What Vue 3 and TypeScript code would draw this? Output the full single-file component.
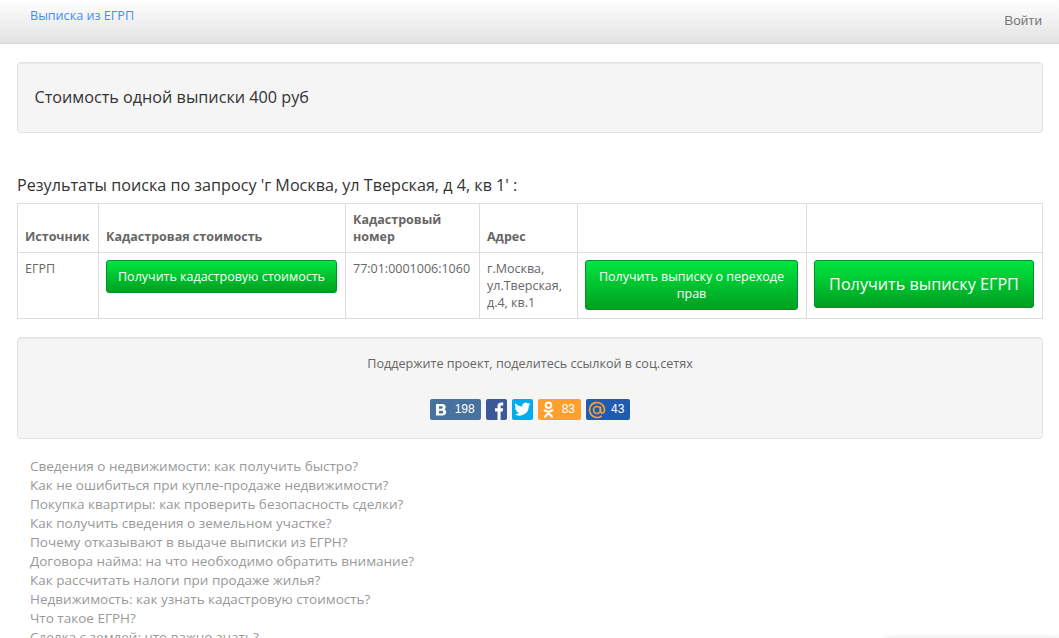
<script setup lang="ts">
const links: string[] = [
  'Сведения о недвижимости: как получить быстро?',
  'Как не ошибиться при купле-продаже недвижимости?',
  'Покупка квартиры: как проверить безопасность сделки?',
  'Как получить сведения о земельном участке?',
  'Почему отказывают в выдаче выписки из ЕГРН?',
  'Договора найма: на что необходимо обратить внимание?',
  'Как рассчитать налоги при продаже жилья?',
  'Недвижимость: как узнать кадастровую стоимость?',
  'Что такое ЕГРН?',
  'Сделка с землей: что важно знать?',
]
</script>

<template>
  <div class="page">
    <nav class="navbar">
      <a class="brand">Выписка из ЕГРП</a>
      <a class="login">Войти</a>
    </nav>
    <main class="content">
      <div class="well price">Стоимость одной выписки 400 руб</div>
      <h4 class="title">Результаты поиска по запросу 'г Москва, ул Тверская, д 4, кв 1' :</h4>
      <table class="table">
        <thead>
          <tr>
            <th class="c1">Источник</th>
            <th class="c2">Кадастровая стоимость</th>
            <th class="c3">Кадастровый номер</th>
            <th class="c4">Адрес</th>
            <th class="c5"></th>
            <th class="c6"></th>
          </tr>
        </thead>
        <tbody>
          <tr>
            <td>ЕГРП</td>
            <td><button class="btn">Получить кадастровую стоимость</button></td>
            <td>77:01:0001006:1060</td>
            <td>г.Москва, ул.Тверская, д.4, кв.1</td>
            <td><button class="btn wrap">Получить выписку о переходе прав</button></td>
            <td><button class="btn large">Получить выписку ЕГРП</button></td>
          </tr>
        </tbody>
      </table>
      <div class="well share">
        <p class="share-text">Поддержите проект, поделитесь ссылкой в соц.сетях</p>
        <div class="socials">
          <span class="soc vk">
            <svg width="22" height="21" viewBox="0 0 22 21"><path fill="#fff" fill-rule="evenodd" d="M6 5h6.200c2.300 0 3.500 1.100 3.500 2.900 0 1.200-.6 2-1.600 2.400 1.300.3 2.100 1.300 2.100 2.700 0 2.100-1.500 3.400-4 3.400H6zm3 2.300v2.400h2.500c.8 0 1.200-.5 1.200-1.200s-.4-1.200-1.200-1.200zm0 4.500v2.600h2.800c.9 0 1.400-.5 1.400-1.300s-.5-1.300-1.400-1.300z"/></svg>
            <span class="count">198</span>
          </span>
          <span class="soc fb">
            <svg width="21" height="21" viewBox="0 0 21 21"><path fill="#fff" d="M11.500 21v-8.500H9V9.300h2.500V7.200C11.500 4.600 13 3.400 15.200 3.400h2v3h-1.300c-1 0-1.300.5-1.300 1.300v1.600h2.500l-.4 3.200h-2.100V21z"/></svg>
          </span>
          <span class="soc tw">
            <svg width="21" height="21" viewBox="0 0 21 21"><path fill="#fff" d="M18.500 5.100c-.6.300-1.200.4-1.900.5.700-.4 1.200-1 1.400-1.800-.6.400-1.300.7-2.100.8a3.300 3.300 0 0 0-5.600 3C7.600 7.500 5.100 6.200 3.500 4.200c-.9 1.500-.4 3.400 1 4.400-.5 0-1-.2-1.500-.4 0 1.600 1.100 3 2.600 3.300-.5.100-1 .1-1.500 0 .4 1.300 1.600 2.200 3.100 2.300A6.600 6.600 0 0 1 2.500 15.100 9.300 9.300 0 0 0 16.800 6.800c.7-.4 1.200-1 1.700-1.700z"/></svg>
          </span>
          <span class="soc ok">
            <svg width="21" height="21" viewBox="0 0 21 21"><g fill="none" stroke="#fff" stroke-width="2"><circle cx="10.500" cy="6.300" r="2.800"/><path stroke-linecap="round" d="M6.500 11.200c2.500 1.700 5.500 1.700 8 0M10.500 13v1.300M10.500 14l-3.500 3.800M10.500 14l3.500 3.800"/></g></svg>
            <span class="count">83</span>
          </span>
          <span class="soc mail">
            <svg width="22" height="21" viewBox="0 0 22 21"><g fill="none" stroke="#ff9f2e" stroke-width="1.600"><circle cx="11" cy="11" r="3.500"/><path d="M14.500 7.500v5c0 2.400 4 2.200 4-1.500a7.500 7.500 0 1 0-2.800 5.800"/></g></svg>
            <span class="count">43</span>
          </span>
        </div>
      </div>
      <ul class="links">
        <li v-for="link in links" :key="link"><a>{{ link }}</a></li>
      </ul>
    </main>
    <div class="corner-shadow"></div>
  </div>
</template>

<style>
html, body { margin: 0; height: 638px; overflow: hidden; background: #fff; }
</style>

<style scoped>
.page {
  position: relative;
  font-family: "Open Sans", "Liberation Sans", sans-serif;
  font-size: 13px;
  line-height: 1.42857;
  color: #666;
  height: 638px;
  overflow: hidden;
}
.navbar {
  height: 43px;
  box-sizing: content-box;
  border-bottom: 1px solid #d4d4d4;
  background: linear-gradient(to bottom, #fff 0, #e2e2e2 100%);
  display: flex;
  justify-content: space-between;
  align-items: flex-start;
  padding: 0 17px 0 30px;
}
.brand { color: #428bff; font-size: 12.6px; line-height: 17px; margin-top: 7px; }
.login { color: #777; font-family: "Liberation Sans", Arial, sans-serif; font-size: 13.5px; line-height: 18px; margin-top: 12px; }
.content { padding: 18px 16px 0 17px; }
.well {
  background: #f5f5f5;
  border: 1px solid #e3e3e3;
  border-radius: 4px;
  box-shadow: inset 0 1px 1px rgba(0,0,0,.05);
  box-sizing: border-box;
}
.price {
  height: 71px;
  padding: 0 17px 0 16.500px;
  display: flex;
  align-items: center;
  font-size: 16.2px;
  color: #333;
}
.title {
  margin: 43px 0 9px;
  font-size: 16.15px;
  font-weight: 400;
  line-height: 18px;
  color: #333;
}
.table {
  width: 1026px;
  border-collapse: collapse;
  table-layout: fixed;
  margin-bottom: 18px;
}
th, td {
  border: 1px solid #ddd;
  padding: 7px 8px 7px 7px;
  vertical-align: top;
  text-align: left;
  font-size: 12.5px;
  line-height: 17px;
  box-sizing: border-box;
}
th { vertical-align: bottom; font-weight: 700; }
.c1 { width: 81px; }
.c2 { width: 247px; }
.c3 { width: 134px; }
.c4 { width: 98px; }
.c5 { width: 229px; }
.btn {
  display: block;
  width: 100%;
  font-family: inherit;
  font-size: 12.5px;
  line-height: 17px;
  color: #fff;
  padding: 7px 10px;
  border: 1px solid #00932c;
  border-radius: 3px;
  background: linear-gradient(to bottom, #00e640 0, #009f1f 100%);
  text-align: center;
  box-sizing: border-box;
}
.btn.wrap { height: 50px; }
.btn.large { font-size: 16.2px; line-height: 22px; padding: 12px 10px; height: 48px; }
.share { height: 102px; text-align: center; padding-top: 17px; }
.share-text { margin: 0; font-size: 12.6px; line-height: 18px; }
.socials {
  display: flex;
  justify-content: center;
  gap: 5px;
  margin-top: 26px;
}
.soc {
  display: flex;
  align-items: center;
  height: 21px;
  border-radius: 2px;
  color: #fff;
  font-family: "Liberation Sans", Arial, sans-serif;
  font-size: 12px;
  line-height: 21px;
}
.count { padding: 0 6px 0 3px; }
.vk { background: #48729e; }
.fb { background: #3b5998; }
.tw { background: #00aced; }
.ok { background: #ff9f2e; }
.mail { background: #1f5cb0; }
.links { list-style: none; margin: 18px 0 0; padding: 0 0 0 13px; }
.links li { font-size: 13.5px; line-height: 19px; color: #999; }
.corner-shadow {
  position: absolute;
  left: 885px;
  right: 0;
  top: 638px;
  height: 10px;
  box-shadow: 0 0 6px rgba(0,0,0,.12);
}
</style>
